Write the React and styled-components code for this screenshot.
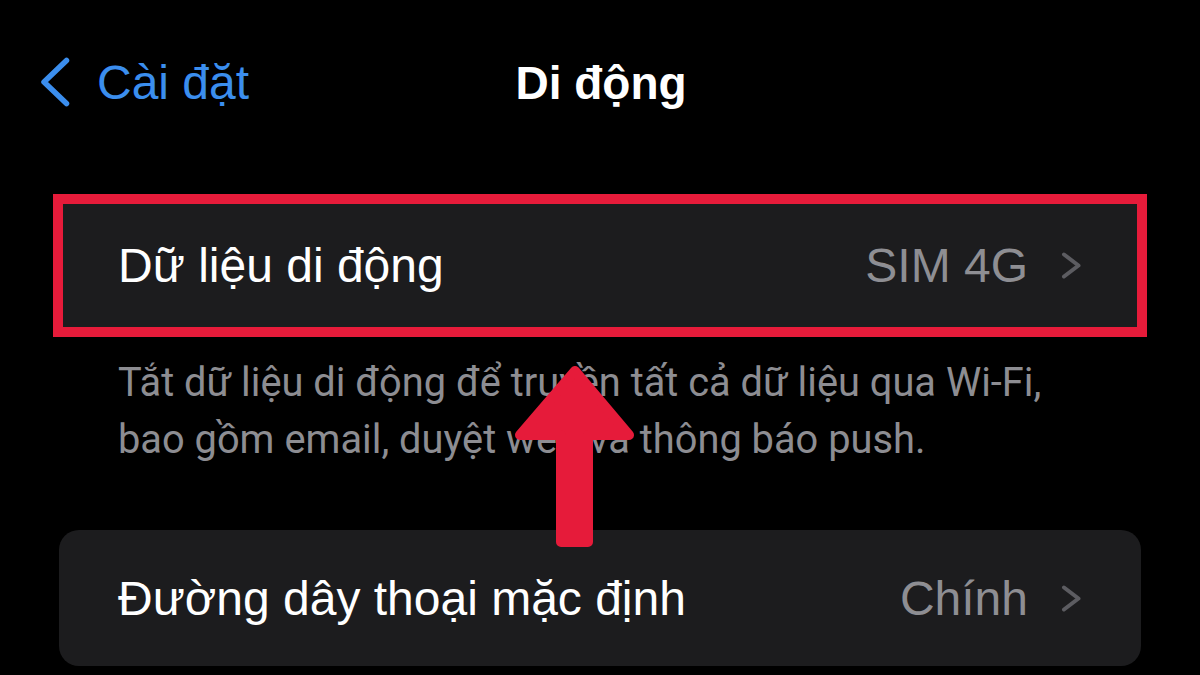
import React from "react";
import styled, { createGlobalStyle } from "styled-components";

const GlobalStyle = createGlobalStyle`
  html, body { margin: 0; padding: 0; background: #000; }
  body { font-family: "Liberation Sans", Arial, sans-serif; }
`;

const Page = styled.div`
  position: relative;
  width: 1200px;
  height: 675px;
  overflow: hidden;
  background: #000;
  display: flex;
  flex-direction: column;
`;

const NavBar = styled.header`
  position: relative;
  height: 166px;
  display: flex;
  align-items: center;
  padding: 0 40px;
  box-sizing: border-box;
`;

const BackButton = styled.div`
  display: flex;
  align-items: center;
  gap: 27px;
  color: #3b8eee;
  font-size: 48px;
  margin-top: -2px;
`;

const Title = styled.h1`
  position: absolute;
  left: 0;
  right: 0;
  top: 0;
  bottom: 0;
  margin: 0;
  display: flex;
  align-items: center;
  justify-content: center;
  color: #fff;
  font-size: 46px;
  font-weight: 700;
  padding-left: 2px;
  pointer-events: none;
`;

const Group = styled.div`
  margin: ${(p) => (p.$highlight ? "28px 53px 0" : "0 59px")};
  background: #1c1c1e;
  border: ${(p) => (p.$highlight ? "10px solid #e61b3a" : "none")};
  border-radius: ${(p) => (p.$highlight ? "0" : "20px")};
`;

const Row = styled.div`
  height: ${(p) => p.$h}px;
  display: flex;
  align-items: center;
  padding: 0 ${(p) => p.$pr}px 0 ${(p) => p.$pl}px;
`;

const Label = styled.span`
  flex: 1;
  color: #fff;
  font-size: 48px;
`;

const Value = styled.span`
  color: #8e8e93;
  font-size: 48px;
  margin-right: 33px;
`;

const Footer = styled.p`
  margin: 17px 110px 62px 118px;
  color: #8d8d92;
  font-family: Roboto, "Liberation Sans", sans-serif;
  font-size: 39.8px;
  line-height: 57px;
`;

const ArrowLayer = styled.svg`
  position: absolute;
  left: 0;
  top: 0;
  pointer-events: none;
`;

const Chevron = () => (
  <svg width="20" height="27" viewBox="0 0 20 27">
    <path d="M3 2.5 L17.5 13.5 L3 24.5" fill="none" stroke="#5c5c61" strokeWidth="4" strokeLinecap="round" strokeLinejoin="round" />
  </svg>
);

const BackChevron = () => (
  <svg width="30" height="50" viewBox="0 0 30 50">
    <path d="M26.5 3.5 L4 25 L26.5 46.5" fill="none" stroke="#3b8eee" strokeWidth="5.5" strokeLinecap="round" strokeLinejoin="round" />
  </svg>
);

export default function App() {
  return (
    <>
      <GlobalStyle />
      <Page>
        <NavBar>
          <BackButton>
            <BackChevron />
            <span>Cài đặt</span>
          </BackButton>
          <Title>Di động</Title>
        </NavBar>

        <Group $highlight>
          <Row $h={123} $pl={55} $pr={56}>
            <Label>Dữ liệu di động</Label>
            <Value>SIM 4G</Value>
            <Chevron />
          </Row>
        </Group>

        <Footer>
          Tắt dữ liệu di động để truyền tất cả dữ liệu qua Wi-Fi, bao gồm email, duyệt web và thông báo push.
        </Footer>

        <Group>
          <Row $h={136} $pl={59} $pr={60}>
            <Label>Đường dây thoại mặc định</Label>
            <Value>Chính</Value>
            <Chevron />
          </Row>
        </Group>

        <ArrowLayer width="1200" height="675" viewBox="0 0 1200 675">
          <path
            d="M575 371 L629 435 L588 435 L588 542 L561 542 L561 435 L520 435 Z"
            fill="#e61b3a"
            stroke="#e61b3a"
            strokeWidth="10"
            strokeLinejoin="round"
          />
        </ArrowLayer>
      </Page>
    </>
  );
}
